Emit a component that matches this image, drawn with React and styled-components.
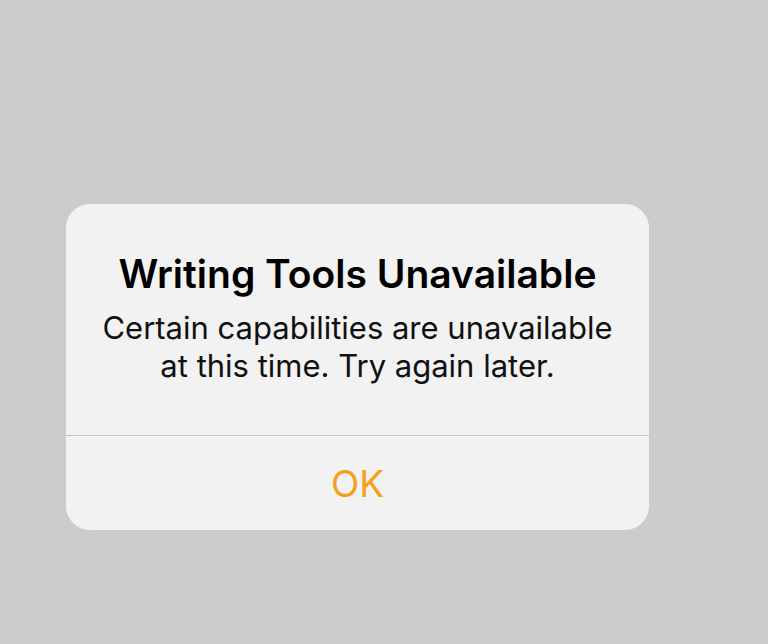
import React from "react";
import styled, { createGlobalStyle } from "styled-components";

const GlobalStyle = createGlobalStyle`
  html, body {
    margin: 0;
    padding: 0;
    background: #cccccc;
  }
  body {
    font-family: Inter, "Noto Sans", "Liberation Sans", sans-serif;
    -webkit-font-smoothing: antialiased;
  }
`;

const Screen = styled.div`
  width: 768px;
  height: 644px;
  background: #cccccc;
  display: flex;
  flex-direction: column;
  padding: 204px 0 0 66px;
  box-sizing: border-box;
`;

const AlertCard = styled.div`
  width: 583px;
  height: 326px;
  background: #f2f2f2;
  border-radius: 24px;
  display: flex;
  flex-direction: column;
  overflow: hidden;
`;

const Content = styled.div`
  height: 232px;
  display: flex;
  flex-direction: column;
  align-items: center;
  padding-top: 48px;
  box-sizing: border-box;
  border-bottom: 1px solid #c6c6c6;
`;

const Title = styled.h2`
  margin: 0;
  font-size: 39px;
  font-weight: 600;
  color: #000;
  letter-spacing: 0;
  line-height: 44px;
  white-space: nowrap;
`;

const Message = styled.p`
  margin: 13px 0 0;
  font-size: 31px;
  font-weight: 400;
  color: #111;
  text-align: center;
  line-height: 38px;
  white-space: nowrap;
`;

const ActionButton = styled.button`
  flex: 1;
  border: none;
  background: transparent;
  font-family: inherit;
  font-size: 37px;
  font-weight: 400;
  color: ${({ tint }) => tint || "#f59f1a"};
  cursor: pointer;
  padding: 0;
`;

const App = () => (
  <>
    <GlobalStyle />
    <Screen>
      <AlertCard>
        <Content>
          <Title>Writing Tools Unavailable</Title>
          <Message>
            Certain capabilities are unavailable
            <br />
            at this time. Try again later.
          </Message>
        </Content>
        <ActionButton>OK</ActionButton>
      </AlertCard>
    </Screen>
  </>
);

export default App;
